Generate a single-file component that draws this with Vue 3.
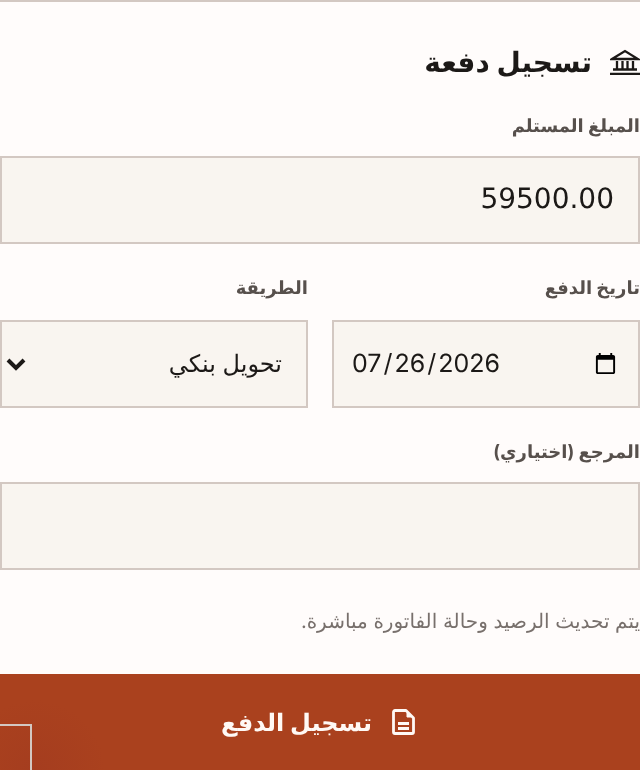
<script setup>
</script>

<template>
  <div class="page" dir="rtl">
    <h2 class="title">
      <svg class="bank" viewBox="0 0 30 26" width="30" height="26" fill="none" stroke="#1c1917" stroke-width="2.300">
        <path d="M2 10 L15 2 L28 10 Z" />
        <path d="M7 12V20M12.500 12V20M17.500 12V20M23 12V20" />
        <path d="M3 20.500H27M0 25H30" />
      </svg>
      <span>تسجيل دفعة</span>
    </h2>
    <label class="lab first">المبلغ المستلم</label>
    <input class="field amount" dir="ltr" value="59500.00" />
    <div class="row">
      <div class="col">
        <label class="lab">تاريخ الدفع</label>
        <input class="field date" type="date" dir="ltr" value="2026-07-26" />
      </div>
      <div class="col">
        <label class="lab">الطريقة</label>
        <div class="selwrap">
          <select class="field sel"><option>تحويل بنكي</option></select>
          <svg class="chev" viewBox="0 0 20 14" width="20" height="14" fill="none" stroke="#1c1917" stroke-width="4">
            <path d="M2 3L10 11L18 3" />
          </svg>
        </div>
      </div>
    </div>
    <label class="lab third">المرجع (اختياري)</label>
    <input class="field" />
    <p class="note">يتم تحديث الرصيد وحالة الفاتورة مباشرة.</p>
    <button class="btn">
      <svg viewBox="0 0 23 26" width="23" height="26" fill="none" stroke="#fff9f5" stroke-width="2.800" stroke-linejoin="round">
        <path d="M3 1.500H14L21.500 9V23A1.500 1.500 0 0 1 20 24.500H3A1.500 1.500 0 0 1 1.500 23V3A1.500 1.500 0 0 1 3 1.500Z" />
        <path d="M15 4L19 8H15Z" fill="#fff9f5" stroke-width="1" />
        <path d="M6 14.500H17M6 19.500H17" />
      </svg>
      <span>تسجيل الدفع</span>
    </button>
    <div class="corner"></div>
  </div>
</template>

<style>
html, body { margin: 0; background: #fffcfb; }
</style>

<style scoped>
.page {
  position: relative;
  width: 640px;
  height: 770px;
  overflow: hidden;
  box-sizing: border-box;
  border-top: 2px solid #d3c8c2;
  font-family: "Inter", "DejaVu Sans", sans-serif;
  color: #1c1917;
  text-rendering: geometricPrecision;
  will-change: transform;
}
.title {
  margin: 0;
  padding-top: 44px;
  display: flex;
  align-items: center;
  gap: 18px;
  font-size: 28px;
  line-height: 32px;
  font-weight: 700;
  color: #1c1917;
}
.lab {
  display: block;
  font-size: 18px;
  line-height: 28px;
  font-weight: 700;
  color: #57504c;
}
.first { margin-top: 35px; margin-bottom: 15px; }
.third { margin-top: 31px; margin-bottom: 15px; }
.field {
  display: block;
  width: 100%;
  height: 88px;
  box-sizing: border-box;
  background: #f9f5f0;
  border: 2px solid #d3c8c2;
  border-radius: 0;
  padding: 0 24px;
  font-family: "Inter", "DejaVu Sans", sans-serif;
  font-size: 24px;
  color: #1c1917;
  outline: none;
  text-rendering: geometricPrecision;
}
.amount { text-align: right; font-size: 28px; font-family: "DejaVu Sans", sans-serif; padding-bottom: 4px; }
.row {
  display: grid;
  grid-template-columns: 1fr 1fr;
  gap: 24px;
  margin-top: 31px;
}
.row .lab { margin-bottom: 17px; }
.date { padding: 0 18px 0 17px; font-size: 25px; }
.date::-webkit-datetime-edit-text { padding: 0 1px; }
.selwrap { position: relative; }
.sel { appearance: none; padding-bottom: 2px; }
.chev { position: absolute; left: 6px; top: 37px; }
.note {
  margin: 37px 0 0;
  font-size: 20px;
  line-height: 28px;
  color: #78706c;
}
.btn {
  margin-top: 39px;
  width: 100%;
  height: 96px;
  border: 0;
  padding: 0 4px 0 0;
  background: radial-gradient(circle 70px at 35px 96px, #a53d1f, #aa411e);
  color: #fff9f5;
  display: flex;
  align-items: center;
  justify-content: center;
  gap: 20px;
  font-family: "Inter", "DejaVu Sans", sans-serif;
  font-size: 24px;
  font-weight: 700;
  text-rendering: geometricPrecision;
}
.corner {
  position: absolute;
  left: -2px;
  top: 722px;
  width: 34px;
  height: 60px;
  border: 2px solid #d3c8c2;
  box-sizing: border-box;
}
</style>
